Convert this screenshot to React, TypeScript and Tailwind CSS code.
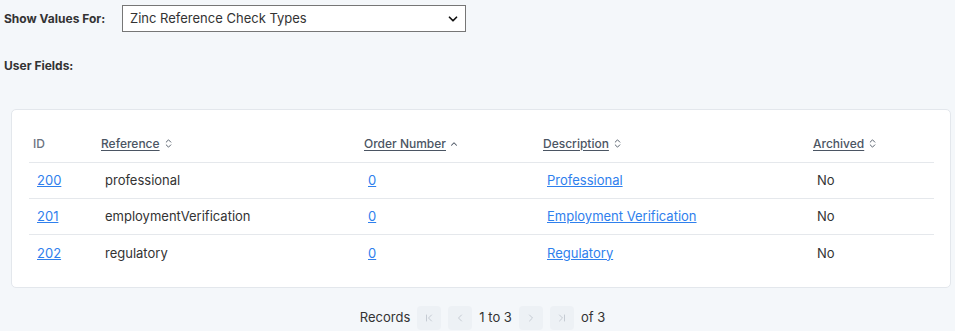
import { ChevronDown, ChevronUp, ChevronsUpDown, ChevronLeft, ChevronRight, ChevronFirst, ChevronLast } from "lucide-react";

type Row = {
  id: number;
  reference: string;
  order: number;
  description: string;
  archived: string;
};

const rows: Row[] = [
  { id: 200, reference: "professional", order: 0, description: "Professional", archived: "No" },
  { id: 201, reference: "employmentVerification", order: 0, description: "Employment Verification", archived: "No" },
  { id: 202, reference: "regulatory", order: 0, description: "Regulatory", archived: "No" },
];

const SortHeader = ({ label, asc }: { label: string; asc?: boolean }) => (
  <span className="inline-flex items-center gap-[3px]">
    <span className="underline underline-offset-2 text-[#4b5563]">{label}</span>
    {asc ? (
      <ChevronUp size={10} strokeWidth={2.5} className="text-[#4b5563]" />
    ) : (
      <ChevronsUpDown size={11} strokeWidth={2} className="text-[#4b5563]" />
    )}
  </span>
);

const PageButton = ({ children }: { children: React.ReactNode }) => (
  <button className="w-[24px] h-[24px] rounded bg-[#edf1f5] flex items-center justify-center text-[#c5cbd3]">
    {children}
  </button>
);

const App = () => {
  return (
    <div className="min-h-[331px] bg-[#f4f7fa] text-[13px] text-[#333] overflow-hidden" style={{ fontFamily: "Inter, 'Noto Sans', sans-serif" }}>
      <div className="flex items-center pt-[5px] pl-1">
        <label className="w-[118px] text-[12px] font-bold text-[#333]">Show Values For:</label>
        <div className="w-[344px] h-[27px] border border-[#767676] bg-white flex items-center justify-between pl-[7px] pr-[5px]">
          <span>Zinc Reference Check Types</span>
          <ChevronDown size={14} strokeWidth={3} className="text-[#111]" />
        </div>
      </div>
      <div className="pl-1 pt-[25px] text-[12px] font-bold">User Fields:</div>
      <div className="ml-[11px] mr-[4px] mt-[34px] bg-white border border-[#e3e7ec] rounded-[5px] pl-[17px] pr-[16px] pt-[16px] pb-[17px]">
        <table className="w-full border-collapse">
          <thead>
            <tr className="border-b border-[#e5e8ec] text-[12px]">
              <th className="w-[68px] h-[36px] text-left font-medium text-[#6b7280] pl-1">ID</th>
              <th className="w-[263px] text-left font-medium pl-1"><SortHeader label="Reference" /></th>
              <th className="w-[179px] text-left font-medium pl-1"><SortHeader label="Order Number" asc /></th>
              <th className="w-[270px] text-left font-medium pl-1"><SortHeader label="Description" /></th>
              <th className="text-left font-medium pl-1"><SortHeader label="Archived" /></th>
            </tr>
          </thead>
          <tbody>
            {rows.map((r, i) => (
              <tr key={r.id} className={i < rows.length - 1 ? "border-b border-[#e5e8ec]" : ""}>
                <td className="h-[36px] pl-2 pt-[2px]"><a href="#" className="text-[#2f80ed] underline">{r.id}</a></td>
                <td className="pl-2 pt-[2px]">{r.reference}</td>
                <td className="pl-2 pt-[2px]"><a href="#" className="text-[#2f80ed] underline">{r.order}</a></td>
                <td className="pl-2 pt-[2px]"><a href="#" className="text-[#2f80ed] underline">{r.description}</a></td>
                <td className="pl-2 pt-[2px]">{r.archived}</td>
              </tr>
            ))}
          </tbody>
        </table>
      </div>
      <div className="flex items-center justify-center gap-[7px] mt-[18px] pl-[10px]">
        <span>Records</span>
        <PageButton><ChevronFirst size={12} /></PageButton>
        <PageButton><ChevronLeft size={12} /></PageButton>
        <span>1 to 3</span>
        <PageButton><ChevronRight size={12} /></PageButton>
        <PageButton><ChevronLast size={12} /></PageButton>
        <span>of 3</span>
      </div>
    </div>
  );
};

export default App;
